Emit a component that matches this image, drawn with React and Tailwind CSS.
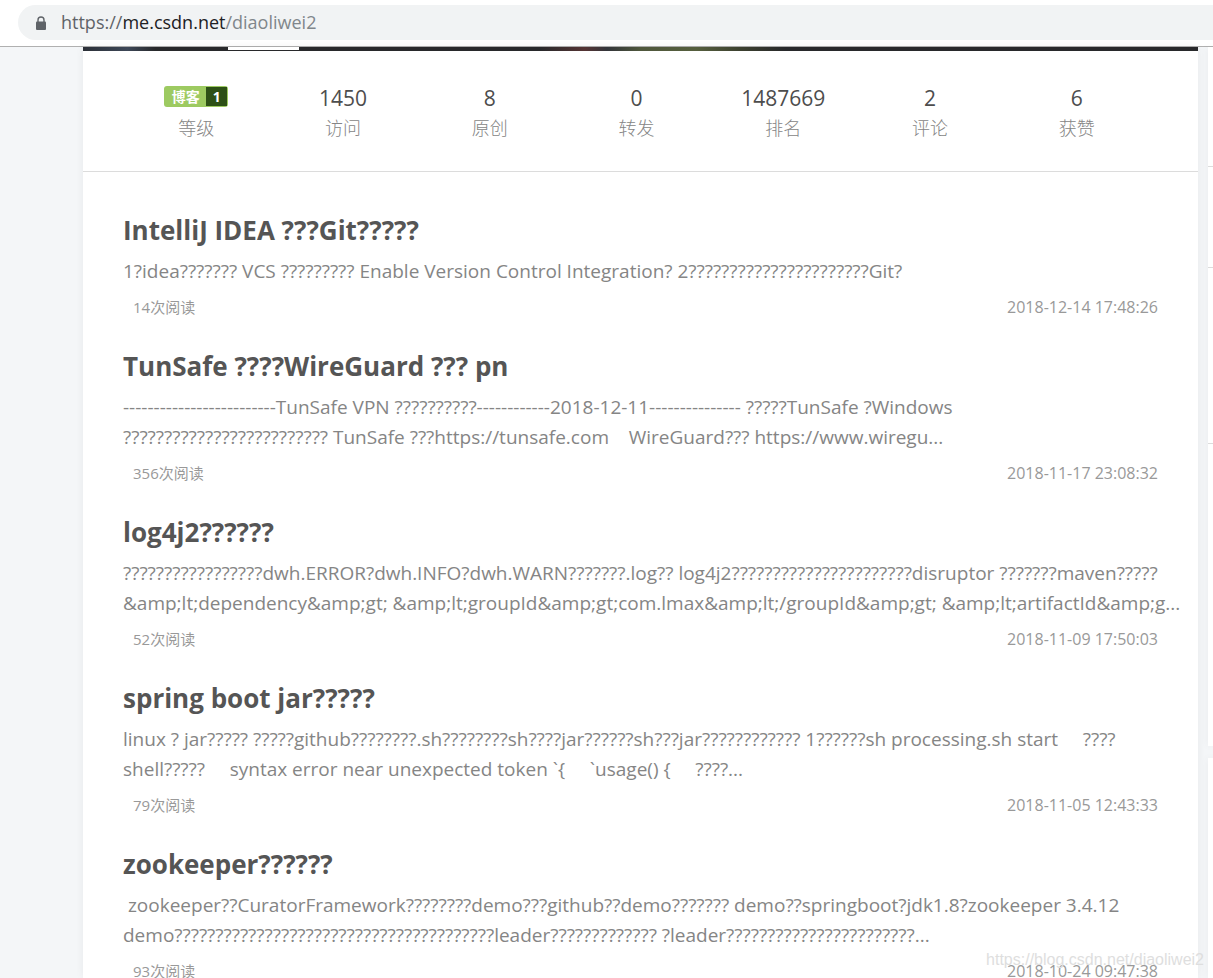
const STATS = [
  { label: '访问', value: '1450' },
  { label: '原创', value: '8' },
  { label: '转发', value: '0' },
  { label: '排名', value: '1487669' },
  { label: '评论', value: '2' },
  { label: '获赞', value: '6' },
]

const ARTICLES = [
  {
    title: 'IntelliJ IDEA ???Git?????',
    lines: [
      '1?idea??????? VCS ????????? Enable Version Control Integration? 2??????????????????????Git?',
    ],
    reads: 14,
    date: '2018-12-14 17:48:26',
  },
  {
    title: 'TunSafe ????WireGuard ??? pn',
    lines: [
      '-------------------------TunSafe VPN ??????????------------2018-12-11--------------- ?????TunSafe ?Windows',
      '????????????????????????? TunSafe ???https://tunsafe.com\u00a0\u00a0\u00a0 WireGuard??? https://www.wiregu...',
    ],
    reads: 356,
    date: '2018-11-17 23:08:32',
  },
  {
    title: 'log4j2??????',
    lines: [
      '?????????????????dwh.ERROR?dwh.INFO?dwh.WARN???????.log?? log4j2??????????????????????disruptor ???????maven?????',
      '&amp;lt;dependency&amp;gt; &amp;lt;groupId&amp;gt;com.lmax&amp;lt;/groupId&amp;gt; &amp;lt;artifactId&amp;g...',
    ],
    reads: 52,
    date: '2018-11-09 17:50:03',
  },
  {
    title: 'spring boot jar?????',
    lines: [
      'linux ? jar????? ?????github????????.sh????????sh????jar??????sh???jar???????????? 1??????sh processing.sh start\u00a0\u00a0\u00a0\u00a0 ????',
      'shell?????\u00a0\u00a0\u00a0\u00a0 syntax error near unexpected token `{\u00a0\u00a0\u00a0\u00a0 `usage() {\u00a0\u00a0\u00a0\u00a0 ????...',
    ],
    reads: 79,
    date: '2018-11-05 12:43:33',
  },
  {
    title: 'zookeeper??????',
    lines: [
      '\u00a0zookeeper??CuratorFramework????????demo???github??demo??????? demo??springboot?jdk1.8?zookeeper 3.4.12',
      'demo???????????????????????????????????????leader????????????? ?leader???????????????????????...',
    ],
    reads: 93,
    date: '2018-10-24 09:47:38',
  },
]

const AddressBar = () => {
  return (
    <header className="shrink-0 border-b border-[#b0b0b0] bg-white pt-[5px] pb-[6px] pl-[18px]">
      <div className="flex h-[35px] items-center rounded-l-full bg-[#f1f3f4] pl-4">
        <button aria-label="Site information" className="mr-[13px]">
          <svg className="h-4 w-[14px]" viewBox="0 0 14 16" fill="none">
            <path d="M4 7.5V5a3 3 0 0 1 6 0v2.5" stroke="#5f6368" strokeWidth="1.4" />
            <rect x="2" y="6.5" width="10" height="8.5" rx="1" fill="#5f6368" />
          </svg>
        </button>
        <div role="textbox" aria-label="Address" className="pb-px text-lg text-[#80868b]">
          <span className="text-[#5f6368]">https://</span>
          <span className="text-[#202124]">me.csdn.net</span>
          /diaoliwei2
        </div>
      </div>
    </header>
  )
}

const Banner = () => {
  return (
    <div className="h-1 bg-[linear-gradient(90deg,#2c3038_0%,#3d4757_4%,#28292b_6.5%,#28292b_41%,#553434_45%,#33353a_47%,#4f573c_50%,#565f3e_55%,#3c402f_59%,#28292b_63%)] pl-[145px]">
      <div className="h-[3px] w-[71px] bg-white" />
    </div>
  )
}

const LevelBadge = () => {
  return (
    <span className="flex h-[21px] w-16 rounded-[3px] bg-[#9dca61] p-px font-bold text-white">
      <span className="flex-1 text-center text-sm leading-[19px]">博客</span>
      <span className="w-[21px] bg-[#2d5016] text-center text-sm leading-[19px]">1</span>
    </span>
  )
}

const Stats = () => {
  return (
    <ul className="flex h-[121px] border-b border-[#dcdcdc] pt-8 pr-12 pl-10">
      <li className="flex flex-1 flex-col items-center">
        <div className="flex h-[30px] items-start pt-[3px]">
          <LevelBadge />
        </div>
        <span className="text-lg leading-[30px] font-light text-[#858585]">等级</span>
      </li>
      {STATS.map((stat) => (
        <li key={stat.label} className="flex flex-1 flex-col items-center">
          <span className="text-[21px] leading-[30px] text-[#4d4d4d]">{stat.value}</span>
          <span className="text-lg leading-[30px] font-light text-[#858585]">{stat.label}</span>
        </li>
      ))}
    </ul>
  )
}

const Article = ({ title, lines, reads, date }) => {
  return (
    <article>
      <h2 className="text-[26px] leading-9 font-bold text-[#555]">
        <a href="#">{title}</a>
      </h2>
      <p className="mt-2 text-[19px] leading-[30px] whitespace-nowrap text-[#858585]">
        {lines.map((line) => (
          <span key={line} className="block">{line}</span>
        ))}
      </p>
      <div className="mt-[9px] flex justify-between pl-[10px] leading-6 text-[#999]">
        <span className="text-[15px]">{reads}次阅读</span>
        <time className="text-base leading-6">{date}</time>
      </div>
    </article>
  )
}

const Sidebar = () => {
  return (
    <aside className="flex w-[5px] shrink-0 flex-col gap-3">
      <div className="bg-white shadow-[0_0_8px_rgba(0,0,0,0.06)]">
        <div className="h-[120px] border-b border-[#dcdcdc]" />
        <div className="h-[101px] border-b border-[#dcdcdc]" />
        <div className="h-[176px] border-b border-[#dcdcdc]" />
        <div className="h-[302px]" />
      </div>
      <div className="flex-1 bg-white shadow-[0_0_8px_rgba(0,0,0,0.06)]" />
    </aside>
  )
}

export default function App() {
  return (
    <div className="relative flex h-screen flex-col overflow-hidden bg-[#f4f6f8] font-['Open_Sans','Noto_Sans_CJK_SC',sans-serif]">
      <AddressBar />
      <div className="flex min-h-0 flex-1 gap-[10px] pl-[83px]">
        <main className="min-w-0 flex-1 bg-white shadow-[0_0_8px_rgba(0,0,0,0.06)]">
          <Banner />
          <Stats />
          <div className="flex flex-col gap-[29px] px-10 pt-10">
            {ARTICLES.map((article) => (
              <Article key={article.title} {...article} />
            ))}
          </div>
        </main>
        <Sidebar />
      </div>
      <span className="pointer-events-none absolute right-[9px] bottom-[6px] font-['Liberation_Sans',sans-serif] text-base text-[#dedede]">
        https://blog.csdn.net/diaoliwei2
      </span>
    </div>
  )
}
